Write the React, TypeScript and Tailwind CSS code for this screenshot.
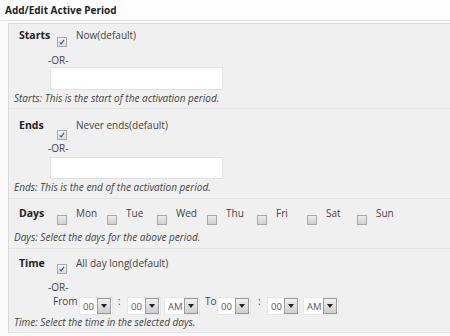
import React from 'react';

const font = { fontFamily: '"Open Sans", "Liberation Sans", sans-serif' };

const Checkbox = ({ checked = false, className = '' }: { checked?: boolean; className?: string }) => (
  <span
    className={`relative inline-block w-[10px] h-[10px] shrink-0 border border-[#a9a9a9] ${
      checked ? 'bg-gradient-to-b from-[#f4f4f4] to-[#dcdcdc]' : 'bg-gradient-to-b from-[#ececec] to-[#cfcfcf]'
    } ${className}`}
  >
    {checked && (
      <svg viewBox="0 0 10 10" className="absolute left-0 top-0 w-[8px] h-[8px]">
        <path d="M2.2 5.4 L3.9 7.4 L7.6 2.4" fill="none" stroke="#2b4fa8" strokeWidth="1.3" />
      </svg>
    )}
  </span>
);

const Select = ({ value, className = '' }: { value: string; className?: string }) => (
  <span className={`inline-flex items-center justify-between h-[18px] bg-white border border-[#e6e6e6] pl-[3px] pr-[1px] ${className}`}>
    <span className="text-[9.5px] leading-[14px] text-[#555] mt-[2px]">{value}</span>
    <span className="w-[14px] h-[16px] border border-[#9a9a9a] bg-gradient-to-b from-[#f0f0f0] to-[#cdcdcd] flex items-center justify-center">
      <svg viewBox="0 0 6 4" className="w-[6px] h-[4px]">
        <path d="M0 0 L6 0 L3 4 Z" fill="#222" />
      </svg>
    </span>
  </span>
);

const Label = ({ children }: { children: React.ReactNode }) => (
  <div className="w-[39px] shrink-0 pl-[10px] font-bold text-[10.5px] leading-[14px] text-[#222]">{children}</div>
);

const Desc = ({ children, className = '' }: { children: React.ReactNode; className?: string }) => (
  <div className={`pl-[5px] italic text-[10px] leading-[14px] text-[#444] ${className}`}>{children}</div>
);

const Text = ({ children, className = '' }: { children: React.ReactNode; className?: string }) => (
  <span className={`text-[10px] leading-[14px] text-[#444] ${className}`}>{children}</span>
);

const days = ['Mon', 'Tue', 'Wed', 'Thu', 'Fri', 'Sat', 'Sun'];

export default function App() {
  return (
    <div className="w-[450px] h-[336px] overflow-hidden bg-[#fafafa]" style={font}>
      <div className="h-[21px] bg-[#fdfdfd] border-b border-[#e4e4e4] pl-[5px] pt-[3px] font-bold text-[10px] leading-[14px] text-[#222]">
        Add/Edit Active Period
      </div>
      <div className="h-[2px] bg-[#fbfbfb]" />
      <div className="ml-[8px] border-l border-t border-[#dadada] bg-[#f0f0f0]">
        {/* Starts */}
        <div className="pt-[4px] pb-[3px] border-b border-[#e4e4e4]">
          <div className="flex">
            <Label>Starts</Label>
            <div className="flex flex-col">
              <div className="flex items-start h-[25px]">
                <Checkbox checked className="ml-[9px] mt-[9px]" />
                <Text className="ml-[9px]">Now(default)</Text>
              </div>
              <Text className="block h-[14px]">-OR-</Text>
              <div className="ml-[2px] w-[173px] h-[23px] bg-white border border-[#e2e2e2]" />
            </div>
          </div>
          <Desc className="mt-[1px]">Starts: This is the start of the activation period.</Desc>
        </div>
        {/* Ends */}
        <div className="pt-[9px] pb-[4px] border-b border-[#e4e4e4]">
          <div className="flex">
            <Label>Ends</Label>
            <div className="flex flex-col">
              <div className="flex items-start h-[23px]">
                <Checkbox checked className="ml-[9px] mt-[12px]" />
                <Text className="ml-[9px]">Never ends(default)</Text>
              </div>
              <Text className="block h-[14px]">-OR-</Text>
              <div className="mt-[2px] ml-[2px] w-[173px] h-[22px] bg-white border border-[#e2e2e2]" />
            </div>
          </div>
          <Desc className="mt-[1px]">Ends: This is the end of the activation period.</Desc>
        </div>
        {/* Days */}
        <div className="pt-[7px] pb-[4px] border-b border-[#e4e4e4]">
          <div className="flex h-[24px]">
            <Label>Days</Label>
            <div className="flex pl-[9px]">
              {days.map((d) => (
                <div key={d} className="w-[50px] flex items-start">
                  <Checkbox className="mt-[9px]" />
                  <Text className="ml-[9px]">{d}</Text>
                </div>
              ))}
            </div>
          </div>
          <Desc>Days: Select the days for the above period.</Desc>
        </div>
        {/* Time */}
        <div className="pt-[7px] pb-[3px] border-b border-[#e4e4e4]">
          <div className="flex">
            <Label>Time</Label>
            <div className="flex flex-col">
              <div className="flex items-start h-[24px]">
                <Checkbox checked className="ml-[9px] mt-[8px]" />
                <Text className="ml-[9px]">All day long(default)</Text>
              </div>
              <Text className="block h-[14px]">-OR-</Text>
              <div className="flex items-start h-[21px] ml-[5px]">
                <Text className="w-[26px] shrink-0">From</Text>
                <Select value="00" className="w-[34px] mt-[3px]" />
                <Text className="w-[4px] ml-[5px] shrink-0">:</Text>
                <Select value="00" className="w-[34px] ml-[5px] mt-[3px]" />
                <Select value="AM" className="w-[36px] ml-[3px] mt-[3px]" />
                <Text className="w-[12px] ml-[5px] shrink-0">To</Text>
                <Select value="00" className="w-[34px] mt-[1px] mt-[3px]" />
                <Text className="w-[4px] ml-[7px] shrink-0">:</Text>
                <Select value="00" className="w-[33px] ml-[5px] mt-[3px]" />
                <Select value="AM" className="w-[36px] ml-[3px] mt-[3px]" />
              </div>
            </div>
          </div>
          <Desc>Time: Select the time in the selected days.</Desc>
        </div>
      </div>
    </div>
  );
}
